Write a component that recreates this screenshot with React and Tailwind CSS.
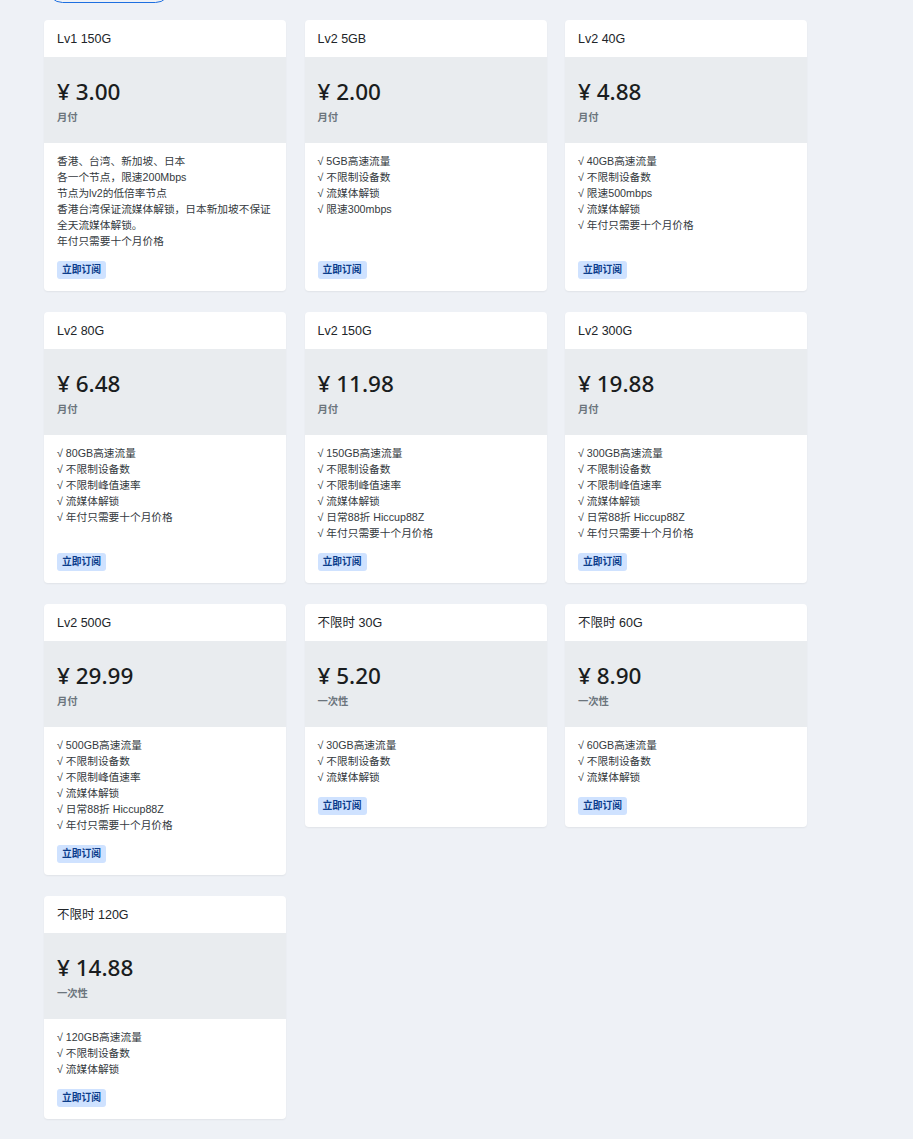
import React from 'react';

const plans = [
  {
    name: 'Lv1 150G',
    price: '3.00',
    cycle: '月付',
    features: [
      '香港、台湾、新加坡、日本',
      '各一个节点，限速200Mbps',
      '节点为lv2的低倍率节点',
      '香港台湾保证流媒体解锁，日本新加坡不保证',
      '全天流媒体解锁。',
      '年付只需要十个月价格',
    ],
  },
  { name: 'Lv2 5GB', price: '2.00', cycle: '月付', features: ['√ 5GB高速流量', '√ 不限制设备数', '√ 流媒体解锁', '√ 限速300mbps'] },
  { name: 'Lv2 40G', price: '4.88', cycle: '月付', features: ['√ 40GB高速流量', '√ 不限制设备数', '√ 限速500mbps', '√ 流媒体解锁', '√ 年付只需要十个月价格'] },
  { name: 'Lv2 80G', price: '6.48', cycle: '月付', features: ['√ 80GB高速流量', '√ 不限制设备数', '√ 不限制峰值速率', '√ 流媒体解锁', '√ 年付只需要十个月价格'] },
  { name: 'Lv2 150G', price: '11.98', cycle: '月付', features: ['√ 150GB高速流量', '√ 不限制设备数', '√ 不限制峰值速率', '√ 流媒体解锁', '√ 日常88折 Hiccup88Z', '√ 年付只需要十个月价格'] },
  { name: 'Lv2 300G', price: '19.88', cycle: '月付', features: ['√ 300GB高速流量', '√ 不限制设备数', '√ 不限制峰值速率', '√ 流媒体解锁', '√ 日常88折 Hiccup88Z', '√ 年付只需要十个月价格'] },
  { name: 'Lv2 500G', price: '29.99', cycle: '月付', features: ['√ 500GB高速流量', '√ 不限制设备数', '√ 不限制峰值速率', '√ 流媒体解锁', '√ 日常88折 Hiccup88Z', '√ 年付只需要十个月价格'] },
  { name: '不限时 30G', price: '5.20', cycle: '一次性', features: ['√ 30GB高速流量', '√ 不限制设备数', '√ 流媒体解锁'], start: true },
  { name: '不限时 60G', price: '8.90', cycle: '一次性', features: ['√ 60GB高速流量', '√ 不限制设备数', '√ 流媒体解锁'], start: true },
  { name: '不限时 120G', price: '14.88', cycle: '一次性', features: ['√ 120GB高速流量', '√ 不限制设备数', '√ 流媒体解锁'] },
];

const PlanCard = ({ plan }) => (
  <div className={`flex flex-col bg-white rounded-[4px] overflow-hidden shadow-[0_1px_2px_rgba(0,0,0,0.06)] ${plan.start ? 'self-start' : ''}`}>
    <div className="h-[37px] flex items-center pt-[2px] px-[13px] text-[12.5px] text-[#212529]">{plan.name}</div>
    <div className="bg-[#e9ecef] px-[13px] pt-[19px] pb-[17px]">
      <div
        className="text-[22.5px] leading-[32px] font-medium text-[#1a1d20]"
        style={{ fontFamily: '"Noto Sans", "Noto Sans CJK SC", sans-serif' }}
      >
        ¥ {plan.price}
      </div>
      <div className="mt-[2px] text-[10.3px] leading-4 font-semibold text-[#6c757d]">{plan.cycle}</div>
    </div>
    <div className="flex-1 flex flex-col px-[13px] pt-[10px] pb-[12px]">
      <div className="mb-[12px]">
        {plan.features.map((f, i) => (
          <div key={i} className="text-[10.7px] leading-4 whitespace-nowrap text-[#343a40]">{f}</div>
        ))}
      </div>
      <div className="mt-auto flex">
        <button className="h-[18px] px-[5px] rounded-[3px] bg-[#cfe2ff] text-[9.75px] font-bold text-[#0b3d8c] leading-[18px]">
          立即订阅
        </button>
      </div>
    </div>
  </div>
);

const App = () => {
  return (
    <div
      className="min-h-[1139px] bg-[#eef1f6] pl-[44px] pb-[20px] overflow-hidden"
      style={{ fontFamily: '"Liberation Sans", "Noto Sans CJK SC", sans-serif' }}
    >
      <div className="ml-[3px] -mt-[28px] mb-[17px] h-[31px] w-[124px] rounded-full border-[1.5px] border-[#1d6fe0]" />
      <div className="grid grid-cols-[242px_242px_242px] gap-x-[18.5px] gap-y-[21px]">
        {plans.map((p) => (
          <PlanCard key={p.name} plan={p} />
        ))}
      </div>
    </div>
  );
};

export default App;
